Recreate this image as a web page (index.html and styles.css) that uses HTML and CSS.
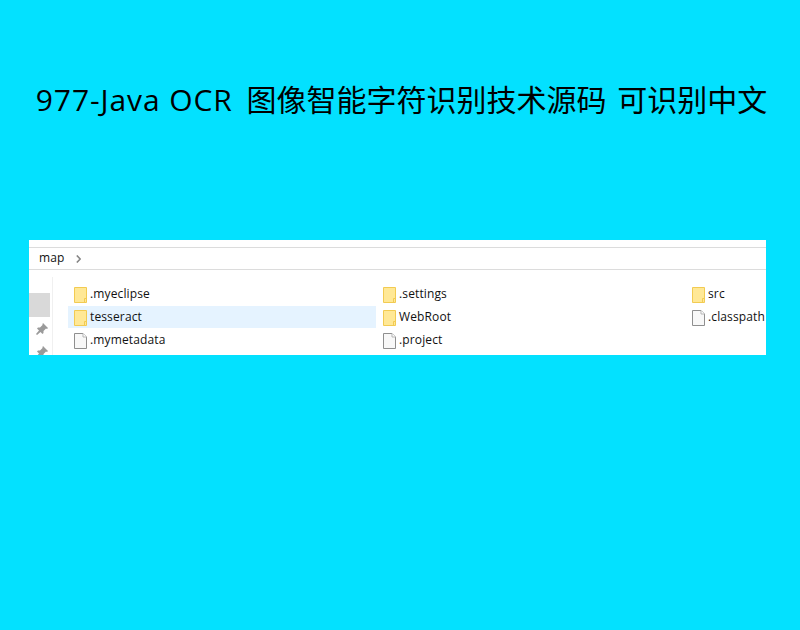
FILE: index.html
```html
<!DOCTYPE html>
<html lang="zh-CN">
<head>
<meta charset="utf-8">
<title>977-Java OCR</title>
<link rel="stylesheet" href="styles.css">
</head>
<body>
<svg class="defs" width="0" height="0" aria-hidden="true">
  <symbol id="folder" viewBox="0 0 13 16">
    <path d="M.5.5h12v15H.5z" fill="#ffe896" stroke="#f2cb52"/>
    <path d="M10.500 15.500v-4h2" fill="none" stroke="#f2cb52"/>
  </symbol>
  <symbol id="file" viewBox="0 0 13 16">
    <path d="M.5.5h8.500l3.500 3.500v11.500h-12z" fill="#f8f8f8" stroke="#8f8f8f"/>
    <path d="M9 .5v3.500h3.500" fill="#fff" stroke="#b5b5b5"/>
  </symbol>
  <symbol id="pin" viewBox="0 0 12 12">
    <path d="M7 0l5 5-1 1-1-.5-2.500 2.500v2l-1 1-2-2-3.500 3-1-1 3-3.500-2-2 1-1h2l2.500-2.500L6.500 1z" fill="#9a9a9a"/>
  </symbol>
</svg>
<main class="page">
  <h1 class="title"><span class="latin">977-Java OCR</span> 图像智能字符识别技术源码 可识别中文</h1>
  <section class="explorer">
    <div class="crumbs"><span class="label">map</span><svg class="chev" width="5" height="8" viewBox="0 0 5 8"><path d="M.8.5L4.200 4 .8 7.500" fill="none" stroke="#858585" stroke-width="1.600"/></svg></div>
    <div class="content">
      <aside class="side">
        <div class="side-active"></div>
        <svg class="pin"><use href="#pin"/></svg>
        <svg class="pin"><use href="#pin"/></svg>
      </aside>
      <div class="files">
        <div class="item"><svg class="ico"><use href="#folder"/></svg><span class="label">.myeclipse</span></div>
        <div class="item"><svg class="ico"><use href="#folder"/></svg><span class="label">.settings</span></div>
        <div class="item"><svg class="ico"><use href="#folder"/></svg><span class="label">src</span></div>
        <div class="item selected"><svg class="ico"><use href="#folder"/></svg><span class="label">tesseract</span></div>
        <div class="item"><svg class="ico"><use href="#folder"/></svg><span class="label">WebRoot</span></div>
        <div class="item"><svg class="ico"><use href="#file"/></svg><span class="label">.classpath</span></div>
        <div class="item"><svg class="ico"><use href="#file"/></svg><span class="label">.mymetadata</span></div>
        <div class="item"><svg class="ico"><use href="#file"/></svg><span class="label">.project</span></div>
      </div>
    </div>
  </section>
</main>
</body>
</html>
```

FILE: styles.css
```css
html, body {
  margin: 0;
  padding: 0;
}
body {
  background: #03e1ff;
}
.defs {
  display: block;
  height: 0;
  overflow: hidden;
}
.page {
  width: 800px;
  height: 630px;
  padding-top: 78px;
  box-sizing: border-box;
  overflow: hidden;
}
.title {
  margin: 0 0 118px;
  height: 44px;
  text-align: center;
  padding-left: 3px;
  font: normal 30px/44px "Open Sans", "Noto Sans CJK SC", sans-serif;
  word-spacing: 3px;
  color: #000;
  white-space: nowrap;
}
.latin {
  letter-spacing: .9px;
  word-spacing: 0;
  margin-right: 3px;
}
.explorer {
  margin-left: 29px;
  width: 737px;
  height: 115px;
  background: #fff;
  overflow: hidden;
  font: 12px "Open Sans", "Noto Sans", sans-serif;
  letter-spacing: .13px;
  color: #111;
  padding-top: 7px;
  box-sizing: border-box;
}
.label {
  margin-bottom: 2px;
}
.crumbs {
  height: 21px;
  border-top: 1px solid #dcdcdc;
  border-bottom: 1px solid #dcdcdc;
  display: flex;
  align-items: center;
  gap: 11px;
  padding-left: 10px;
}
.content {
  display: flex;
  height: 90px;
}
.side {
  width: 22px;
  margin-right: 1px;
  padding-top: 23px;
  box-sizing: border-box;
  display: flex;
  flex-direction: column;
  align-items: center;
  flex: none;
  height: 110px;
}
.side-active {
  width: 21px;
  height: 24px;
  margin-right: 1px;
  background: #d9d9d9;
  margin-bottom: 6px;
}
.pin {
  width: 12px;
  height: 12px;
  margin-bottom: 11px;
  margin-left: 3px;
  flex: none;
}
.files {
  margin-top: 7px;
  border-left: 1px solid #f0f0f0;
  padding: 6px 0 0 15px;
  display: grid;
  grid-template-columns: 309px 309px 120px;
  grid-auto-rows: 23px;
  height: 90px;
  box-sizing: border-box;
}
.item {
  display: flex;
  align-items: center;
  gap: 3px;
  padding-left: 6px;
  white-space: nowrap;
}
.selected {
  background: linear-gradient(#e5f3ff 22px, transparent 22px);
  margin-right: 1px;
}
.ico {
  width: 13px;
  height: 16px;
  flex: none;
}
```
